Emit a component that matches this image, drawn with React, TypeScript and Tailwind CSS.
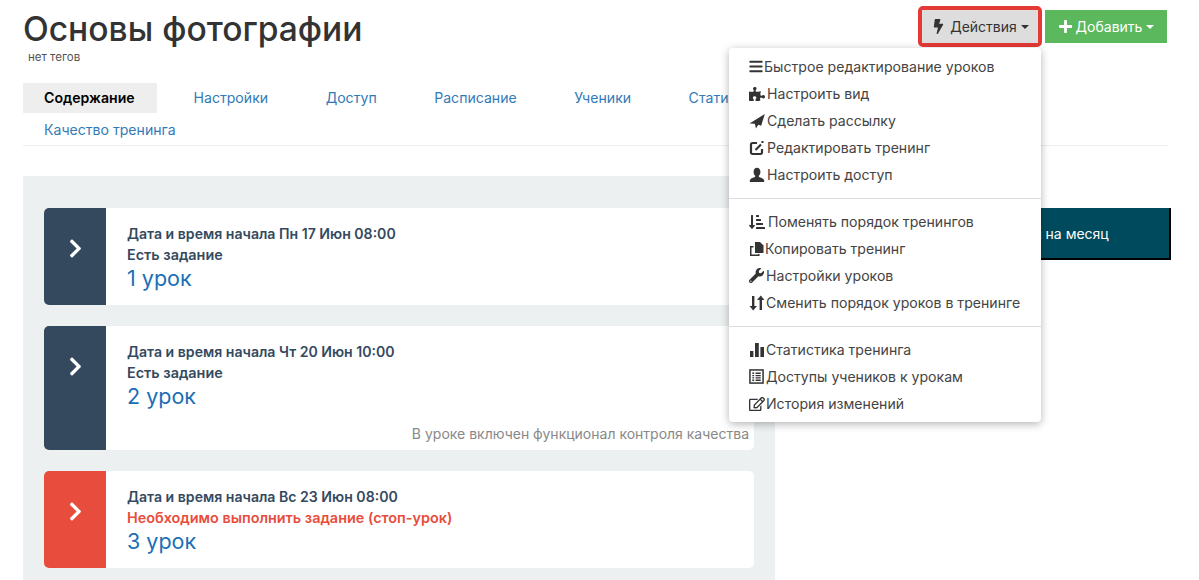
import React from "react";
import {
  FaBars,
  FaBolt,
  FaChevronRight,
  FaPlus,
  FaPuzzlePiece,
  FaRegEdit,
  FaSortAmountDownAlt,
  FaWrench,
} from "react-icons/fa";

const tabs = [
  "Содержание",
  "Настройки",
  "Доступ",
  "Расписание",
  "Ученики",
  "Статистика",
  "Уведомления о завершении",
  "Качество тренинга",
];

function Caret() {
  return <span className="ml-1 inline-block h-0 w-0 border-x-4 border-t-4 border-x-transparent border-t-current" />;
}

function SendIcon() {
  return (
    <svg viewBox="0 0 16 16" className="h-4 w-4" fill="currentColor">
      <path d="M15.8 1 .5 10.6l5.3.2L7 15.4l2.2-3.6 3 1z" />
    </svg>
  );
}

function UserIcon() {
  return (
    <svg viewBox="0 0 16 16" className="h-4 w-4" fill="currentColor">
      <path d="M8 .8c-2.2 0-3.4 1.8-3.4 4.1 0 1.6.7 3 1.5 3.8v1.3c-2 .8-5.3 1.5-5.3 4v1h14.4v-1c0-2.5-3.3-3.2-5.3-4V8.7c.8-.8 1.5-2.2 1.5-3.8C11.4 2.6 10.2.8 8 .8z" />
    </svg>
  );
}

function EditSquare() {
  return (
    <svg viewBox="0 0 16 16" className="h-4 w-4" fill="none" stroke="currentColor" strokeWidth="2.2">
      <path d="M8 3H3.5A1.5 1.5 0 0 0 2 4.5v8A1.5 1.5 0 0 0 3.5 14h8a1.5 1.5 0 0 0 1.5-1.5V9" />
      <path d="M6.5 10 12 4.5" />
      <path d="M13.5 1v2" strokeWidth="2" />
    </svg>
  );
}

function CopyIcon() {
  return (
    <svg viewBox="0 0 16 16" className="h-4 w-4" fill="currentColor">
      <path d="M6 1h5l3.5 3.5V12H6z" />
      <path d="M1 5h3.5v1.5H2.5v7H9V13h1.5v2H1z" />
    </svg>
  );
}

function SwapIcon() {
  return (
    <svg viewBox="0 0 16 16" className="h-4 w-4" fill="currentColor">
      <path d="M3 1h2.4v10H8l-3.8 4.5L.5 11H3z" />
      <path d="M10.6 15V5H8l3.8-4.5L15.5 5H13v10z" />
    </svg>
  );
}

function StatsIcon() {
  return (
    <svg viewBox="0 0 16 16" className="h-4 w-4" fill="currentColor">
      <rect x="1" y="9" width="3.4" height="6" />
      <rect x="6" y="1" width="3.8" height="14" />
      <rect x="11.4" y="5" width="3.6" height="10" />
    </svg>
  );
}

function ListAltIcon() {
  return (
    <svg viewBox="0 0 16 16" className="h-[15px] w-[15px]" fill="none" stroke="currentColor">
      <rect x="1" y="1" width="14" height="14" strokeWidth="1.6" />
      <path d="M3.5 4.5h2M7 4.5h5.5M3.5 7h2M7 7h5.5M3.5 9.5h2M7 9.5h5.5M3.5 12h2M7 12h5.5" strokeWidth="1.4" />
    </svg>
  );
}

const menuGroups = [
  [
    { label: "Быстрое редактирование уроков", icon: <FaBars className="h-[15px] w-[14px]" />, gap: "mr-[1px]" },
    { label: "Настроить вид", icon: <FaPuzzlePiece className="h-4 w-4" />, gap: "mr-[2px]" },
    { label: "Сделать рассылку", icon: <SendIcon />, gap: "mr-[2px]" },
    { label: "Редактировать тренинг", icon: <EditSquare />, gap: "mr-[2px]" },
    { label: "Настроить доступ", icon: <UserIcon />, gap: "mr-[2px]" },
  ],
  [
    { label: "Поменять порядок тренингов", icon: <FaSortAmountDownAlt className="h-4 w-4" />, gap: "mr-[3px]" },
    { label: "Копировать тренинг", icon: <CopyIcon />, gap: "mr-[0px]" },
    { label: "Настройки уроков", icon: <FaWrench className="h-[15px] w-[15px]" />, gap: "mr-[2px]" },
    { label: "Сменить порядок уроков в тренинге", icon: <SwapIcon />, gap: "mr-[1px]" },
  ],
  [
    { label: "Статистика тренинга", icon: <StatsIcon />, gap: "mr-[1px]" },
    { label: "Доступы учеников к урокам", icon: <ListAltIcon />, gap: "mr-[2px]" },
    { label: "История изменений", icon: <FaRegEdit className="h-4 w-4" />, gap: "mr-[1px]" },
  ],
];

const lessons = [
  { date: "Пн 17 Июн 08:00", task: "Есть задание", title: "1 урок" },
  { date: "Чт 20 Июн 10:00", task: "Есть задание", title: "2 урок", note: "В уроке включен функционал контроля качества" },
  { date: "Вс 23 Июн 08:00", task: "Необходимо выполнить задание (стоп-урок)", title: "3 урок", stop: true },
];

function LessonCard({ lesson }: { lesson: (typeof lessons)[number] }) {
  return (
    <div className="flex overflow-hidden rounded-[5px] bg-white">
      <div className={`flex w-[62px] shrink-0 items-start justify-center pt-[30px] text-white ${lesson.stop ? "bg-[#e74c3c]" : "bg-[#34495e]"}`}>
        <FaChevronRight className="h-[21px] w-[21px]" />
      </div>
      <div className={`flex-1 pl-[21px] pr-[5px] pt-[15px] ${lesson.note ? "pb-[6.5px]" : "pb-[13px]"}`}>
        <div className="text-[14.1px] font-semibold leading-[21px] text-[#34495e]">Дата и время начала {lesson.date}</div>
        <div className={`text-[14.4px] font-semibold leading-[21px] ${lesson.stop ? "text-[#e74c3c]" : "text-[#34495e]"}`}>{lesson.task}</div>
        <div className="text-[21.5px] leading-[27px] text-[#1b6fb5]">{lesson.title}</div>
        {lesson.note && <div className="mt-[14px] text-right text-[14px] leading-[20px] text-[#888888]">{lesson.note}</div>}
      </div>
    </div>
  );
}

export default function App() {
  return (
    <div className="relative h-[580px] overflow-hidden bg-white px-[23px] font-['Inter',sans-serif] text-[#333333]">
      {/* Header */}
      <div className="flex items-start justify-between pr-[9px]">
        <div>
          <h1 className="pt-[9px] text-[33.6px] font-medium leading-[40px]">Основы фотографии</h1>
          <div className="pl-[5px] pt-[1px] text-[11.5px] leading-[15px] text-[#555555]">нет тегов</div>
        </div>
        <div className="flex items-center gap-[3px] pt-[6px]">
          <div className="rounded-[5px] border-[4px] border-[#e53935]">
            <button className="flex h-[33px] w-[116px] items-center justify-center bg-[#dddddd] text-[14px] text-[#333333]">
              <FaBolt className="mr-[4px] h-[15px] w-[15px]" />
              Действия
              <Caret />
            </button>
          </div>
          <button className="flex h-[33px] w-[122px] items-center justify-center bg-[#5cb85c] text-[14px] text-white">
            <FaPlus className="mr-[3px] h-[15px] w-[15px]" />
            Добавить
            <Caret />
          </button>
        </div>
      </div>

      {/* Tabs */}
      <div className="mr-[8px] mt-[18px] flex flex-wrap gap-x-[15.5px] gap-y-[2px] border-b border-[#eeeeee] text-[14.1px]">
        {tabs.map((tab, index) => (
          <a
            key={tab}
            className={`h-[30px] px-[21px] leading-[30px] ${index === 0 ? "w-[134px] bg-[#eeeeee] font-semibold text-black" : "text-[#337ab7]"}`}
          >
            {tab}
          </a>
        ))}
      </div>

      {/* Content */}
      <div className="mt-[30px] flex">
        <div className="w-[752px] shrink-0 bg-[#ecf0f1] px-[21px] pb-[40px] pt-[32px]">
          <div className="flex flex-col gap-[20.5px]">
            {lessons.map((lesson) => (
              <LessonCard key={lesson.title} lesson={lesson} />
            ))}
          </div>
        </div>
        <div className="ml-[20px] mt-[32px] flex h-[52px] w-[376px] items-center justify-center border-b-2 border-r-2 border-black bg-[#004a5e] pl-[8px] text-[14px] text-white">
          Оформить полный доступ на месяц
        </div>
      </div>

      {/* Dropdown */}
      <div className="absolute left-[729px] top-[48px] w-[312px] rounded-[4px] bg-white py-[5px] text-[14.1px] text-[#444444] shadow-[0_2px_8px_rgba(0,0,0,0.3)]">
        {menuGroups.map((group, groupIndex) => (
          <div key={groupIndex}>
            {groupIndex > 0 && <div className="my-[9.5px] h-px bg-[#dddddd]" />}
            {group.map((item) => (
              <div key={item.label} className="flex h-[27px] items-center whitespace-nowrap pl-[20px]">
                <span className={`text-[#333333] ${item.gap}`}>{item.icon}</span>
                {item.label}
              </div>
            ))}
          </div>
        ))}
      </div>
    </div>
  );
}
